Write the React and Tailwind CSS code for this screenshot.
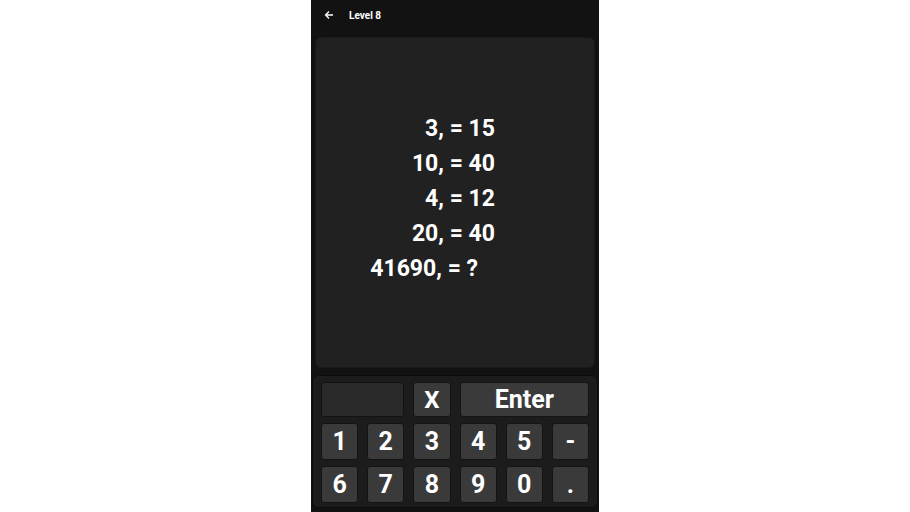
const LINES = ["3, = 15", "10, = 40", "4, = 12", "20, = 40"];
const ROW_A = ["1", "2", "3", "4", "5", "-"];
const ROW_B = ["6", "7", "8", "9", "0", "."];

function Key({ children, className = "" }) {
  return (
    <div
      className={`flex items-center justify-center rounded-[3px] border border-[#141414] bg-[#3a3a3a] font-bold text-white ${className}`}
    >
      {children}
    </div>
  );
}

export default function App() {
  return (
    <div className="flex h-[512px] w-[910px] justify-center bg-white font-['Roboto',sans-serif]">
      <div className="flex w-[288px] flex-col bg-[#121212]">
        <div className="flex h-[37px] items-center pb-[7px]">
          <svg
            width="10"
            height="10"
            viewBox="0 0 10 10"
            className="ml-[13px]"
            fill="none"
            stroke="white"
            strokeWidth="1.3"
          >
            <path d="M9 5H1.5M5 1.5L1.5 5L5 8.5" />
          </svg>
          <span className="ml-[15px] text-[10px] font-bold text-white">Level 8</span>
        </div>

        <div className="mx-[4px] flex h-[331px] flex-col items-end justify-center rounded-[6px] border border-[#191919] bg-[#212121] pb-[8px] pr-[99px] text-[23px] font-bold leading-[35px] text-white">
          {LINES.map((l) => (
            <div key={l}>{l}</div>
          ))}
          <div className="mr-[17px]">41690, = ?</div>
        </div>

        <div className="mx-[1px] mt-[7px] grid h-[133px] grid-cols-6 grid-rows-[35px_37px_37px] gap-x-[9px] gap-y-[6px] rounded-[6px] border border-[#0c0c0c] bg-[#1c1c1c] px-[8px] pb-[4px] pt-[6px]">
          <div className="col-span-2 rounded-[3px] border border-[#121212] bg-[#2a2a2a]" />
          <Key className="text-[24px]">X</Key>
          <Key className="col-span-3 text-[25px]">Enter</Key>
          {ROW_A.map((k) => (
            <Key key={k} className="text-[25px]">
              {k}
            </Key>
          ))}
          {ROW_B.map((k) => (
            <Key key={k} className="text-[25px]">
              {k}
            </Key>
          ))}
        </div>
      </div>
    </div>
  );
}
